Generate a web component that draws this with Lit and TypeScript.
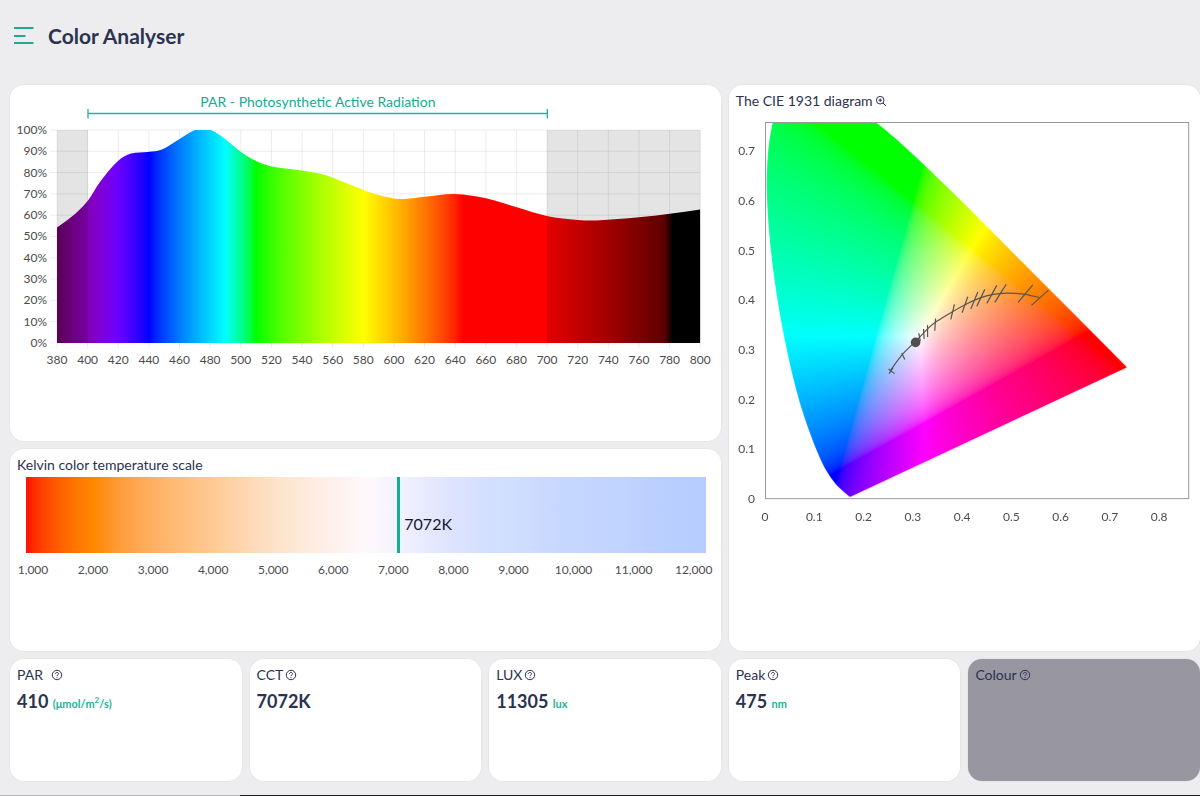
import { LitElement, html, svg, css } from "lit";
import { customElement, query } from "lit/decorators.js";

type Point = [number, number];

/** Chordal Catmull-Rom spline through the points, written as cubic Bézier segments. */
function smoothPath(points: Point[]): string {
  const last = points.length - 1;
  const dist = (a: Point, b: Point) => Math.hypot(b[0] - a[0], b[1] - a[1]);
  const slopes = points.map((p, i): Point => {
    const a = points[Math.max(i - 1, 0)];
    const b = points[Math.min(i + 1, last)];
    const span = dist(a, p) + dist(p, b);
    return [(b[0] - a[0]) / span, (b[1] - a[1]) / span];
  });
  let d = `M${points[0][0]} ${points[0][1]}`;
  for (let i = 0; i < last; i++) {
    const p = points[i];
    const q = points[i + 1];
    const third = dist(p, q) / 3;
    const c = [
      p[0] + slopes[i][0] * third,
      p[1] + slopes[i][1] * third,
      q[0] - slopes[i + 1][0] * third,
      q[1] - slopes[i + 1][1] * third,
      q[0],
      q[1],
    ].map((v) => v.toFixed(2));
    d += `C${c.join(" ")}`;
  }
  return d;
}

/** Approximate display colour of one wavelength in nanometres. */
function wavelengthColor(w: number): string {
  let r = 0;
  let g = 0;
  let b = 0;
  if (w < 440) {
    r = (440 - w) / 60;
    b = 1;
  } else if (w < 490) {
    g = (w - 440) / 50;
    b = 1;
  } else if (w < 510) {
    g = 1;
    b = (510 - w) / 20;
  } else if (w < 580) {
    r = (w - 510) / 70;
    g = 1;
  } else if (w < 645) {
    r = 1;
    g = (645 - w) / 65;
  } else if (w <= 780) {
    r = 1;
  }
  let k = 1;
  if (w < 420) k = 0.3 + (0.7 * (w - 380)) / 40;
  else if (w > 700) k = 0.3 + (0.7 * (780 - w)) / 80;
  const level = (v: number) => (v <= 0 ? 0 : Math.round(255 * Math.pow(v * k, 0.8)));
  return `rgb(${level(r)},${level(g)},${level(b)})`;
}

const range = (from: number, to: number, step: number) =>
  Array.from({ length: Math.round((to - from) / step) + 1 }, (_, i) => from + i * step);

const questionIcon = html`<svg class="icon" viewBox="0 0 12 12" aria-hidden="true">
  <circle cx="6" cy="6" r="4.7" />
  <path d="M4.4 4.9c0-.9.7-1.5 1.6-1.5s1.6.6 1.6 1.4c0 .9-1.6 1.1-1.6 2.100" />
  <path d="M6 7.900v1" />
</svg>`;

const zoomIcon = html`<svg class="icon" viewBox="0 0 12 12" aria-hidden="true">
  <circle cx="5.2" cy="5.2" r="3.8" />
  <path d="M8 8l2.800 2.800M5.200 3.400v3.600M3.400 5.200h3.600" />
</svg>`;

const sx = (nm: number) => 47 + (nm - 380) * 1.532;
const sy = (percent: number) => 258 - percent * 2.13;

const SPECTRUM: Point[] = [
  [47, 142.5], [65, 129], [78, 115.5], [90, 97], [108, 76], [121, 68.5], [138, 67],
  [152, 64.5], [168, 55], [184, 45.5], [193, 44], [202, 45.5], [214, 53], [231, 67], [246, 76],
  [262, 81.5], [292, 85.5], [315, 90], [335, 97.5], [350, 103.5], [365, 109], [384, 113.5],
  [395, 114], [415, 111.8], [445, 109], [476, 113.3], [507, 122.3], [537, 131],
  [568, 135], [587, 135.5], [629, 132.3], [660, 128.7], [690.5, 124.5],
];

@customElement("spectrum-chart")
export class SpectrumChart extends LitElement {
  static styles = css`
    :host { display: block; }
    .chart { display: block; width: 100%; }
    .tick { font-size: 12px; fill: #4c4c4c; }
    .end { text-anchor: end; }
    .middle { text-anchor: middle; }
    .grid { stroke: #000; stroke-opacity: 0.08; }
    .shade { fill: #000; fill-opacity: 0.105; }
    .par { fill: #16ab92; font-size: 14px; text-anchor: middle; }
    .bracket { stroke: #26b39b; stroke-width: 1.3; fill: none; }
  `;

  render() {
    const curve = smoothPath(SPECTRUM);
    return html`<svg class="chart" viewBox="0 0 711 300" role="img" aria-label="Spectrum">
      <defs>
        <linearGradient id="rainbow">
          ${range(380, 775, 5).map(
            (w) => svg`<stop offset=${(w - 380) / 420} stop-color=${wavelengthColor(w)} />`
          )}
          <stop offset="0.945" stop-color="#610000" />
          <stop offset="0.957" stop-color="#000" />
        </linearGradient>
        <clipPath id="plot"><rect x="47" y="45" width="643.5" height="213" /></clipPath>
      </defs>
      <text class="par" x="308" y="22">PAR - Photosynthetic Active Radiation</text>
      <path class="bracket" d="M78 28.5H537.5M78 24v9.500M537.5 24v9.500" />
      <g class="grid">
        ${range(0, 100, 10).map((p) => svg`<path d=${`M40 ${sy(p)}H690`} />`)}
        ${range(380, 800, 20).map((w) => svg`<path d=${`M${sx(w)} 45V263`} />`)}
      </g>
      <path d="${curve}V258H47Z" fill="url(#rainbow)" clip-path="url(#plot)" />
      <rect class="shade" x="47" y="45" width="31" height="213" />
      <rect class="shade" x="537" y="45" width="153.5" height="213" />
      ${range(0, 100, 10).map((p) => svg`<text class="tick end" x="37" y=${sy(p) + 4}>${p}%</text>`)}
      ${range(380, 800, 20).map((w) => svg`<text class="tick middle" x=${sx(w)} y="279">${w}</text>`)}
    </svg>`;
  }
}

/** Spectral locus of the 1931 standard observer. */
const LOCUS: Point[] = [
  [0.1741, 0.005], [0.1714, 0.0051], [0.1689, 0.0069], [0.1644, 0.0109], [0.1566, 0.0177],
  [0.144, 0.0297], [0.1241, 0.0578], [0.1096, 0.0868], [0.0913, 0.1327], [0.0687, 0.2007],
  [0.0454, 0.295], [0.0235, 0.4127], [0.0082, 0.5384], [0.0039, 0.6548], [0.0139, 0.7502],
  [0.0389, 0.812], [0.0743, 0.8338], [0.1142, 0.8262], [0.1547, 0.8059], [0.2296, 0.7543],
  [0.3016, 0.6923], [0.3731, 0.6245], [0.4441, 0.5547], [0.5125, 0.4866], [0.5752, 0.4242],
  [0.627, 0.3725], [0.6915, 0.3083], [0.7347, 0.2653],
];

const PLANCKIAN: Point[] = [
  [161, 258], [172.7, 242], [186.7, 228], [199.3, 215], [208, 208], [223.3, 198.7],
  [236, 191.6], [249.3, 185.6], [262.7, 181.6], [277.7, 180], [294.3, 181], [310.3, 184.4],
];

const ISOTHERMS = [
  "M159.5 256l6 4.5M160 260.5l4-6", "M172.7 240l3 6.5", "M189.7 220l1.5 8",
  "M194.5 216l.5 10", "M198.5 212v12", "M206.5 205.5l-.8 12.2",
  "M225.3 191.3l-3.6 15", "M238.7 183.7l-5.7 16", "M248.7 179l-7 17",
  "M255.7 176.3l-8 17", "M267.7 172.3l-10 18", "M277 171.3l-11.3 18",
  "M303.7 171.7l-14.7 17.6", "M319.3 177l-17 15.3",
];

const CX = 492.5;
const CY = 497;
const PLOT_W = 423;
const PLOT_H = 377;

/** Linear light to an 8-bit sRGB channel. */
const encode = (v: number) =>
  255 * (v <= 0.0031308 ? 12.92 * v : 1.055 * Math.pow(v, 1 / 2.4) - 0.055);

@customElement("cie-diagram")
export class CieDiagram extends LitElement {
  @query("canvas") private canvas!: HTMLCanvasElement;

  static styles = css`
    :host { display: block; }
    .chart { display: block; width: 100%; }
    .gamut { display: block; width: 100%; height: 100%; }
    .frame { fill: none; stroke: #999; }
    .tick { font-size: 12px; fill: #4c4c4c; }
    .end { text-anchor: end; }
    .middle { text-anchor: middle; }
    .curve { fill: none; stroke: #555; stroke-width: 1.2; }
    .point { fill: #505050; }
  `;

  firstUpdated() {
    const source = document.createElement("canvas");
    source.width = PLOT_W;
    source.height = PLOT_H;
    const sctx = source.getContext("2d")!;
    const image = sctx.createImageData(PLOT_W, PLOT_H);
    for (let row = 0; row < PLOT_H; row++) {
      for (let col = 0; col < PLOT_W; col++) {
        const x = col / CX;
        const y = Math.max((PLOT_H - row) / CY, 0.001);
        const X = x / y;
        const Z = (1 - x - y) / y;
        const rgb = [
          3.2406 * X - 1.5372 - 0.4986 * Z,
          -0.9689 * X + 1.8758 + 0.0415 * Z,
          0.0557 * X - 0.204 + 1.057 * Z,
        ].map((v) => Math.max(v, 0));
        const peak = Math.max(...rgb);
        const at = (row * PLOT_W + col) * 4;
        rgb.forEach((v, i) => (image.data[at + i] = encode(v / peak)));
        image.data[at + 3] = 255;
      }
    }
    sctx.putImageData(image, 0, 0);

    const outline = LOCUS.map(([x, y]): Point => [x * CX, PLOT_H - y * CY]);
    const ctx = this.canvas.getContext("2d")!;
    ctx.clip(new Path2D(smoothPath(outline) + "Z"));
    ctx.drawImage(source, 0, 0);
  }

  render() {
    return html`<svg class="chart" viewBox="0 0 471 420" role="img" aria-label="Chromaticity diagram">
      <foreignObject x="36" y="9" width="423" height="377">
        <canvas class="gamut" width=${PLOT_W} height=${PLOT_H}></canvas>
      </foreignObject>
      <rect class="frame" x="36.5" y="9.5" width="423" height="376" />
      <path class="curve" d=${smoothPath(PLANCKIAN)} />
      ${ISOTHERMS.map((d) => svg`<path class="curve" d=${d} />`)}
      <circle class="point" cx="186.5" cy="229.3" r="4.8" />
      ${range(0, 7, 1).map(
        (n) => svg`<text class="tick end" x="26" y=${Math.round(390 - n * 49.7)}>${n / 10}</text>`
      )}
      ${range(0, 8, 1).map(
        (n) => svg`<text class="tick middle" x=${36 + n * 49.25} y="408">${n / 10}</text>`
      )}
    </svg>`;
  }
}

interface Reading {
  label: string;
  value?: string;
  unit?: unknown;
  tint?: boolean;
}

const READINGS: Reading[] = [
  { label: "PAR", value: "410", unit: html`(μmol/m<sup>2</sup>/s)` },
  { label: "CCT", value: "7072K" },
  { label: "LUX", value: "11305", unit: "lux" },
  { label: "Peak", value: "475", unit: "nm" },
  { label: "Colour", tint: true },
];

@customElement("app-root")
export class AppRoot extends LitElement {
  private kelvin = 7072;

  static styles = css`
    :host {
      display: flex;
      flex-direction: column;
      min-height: 100vh;
      background: #ededef;
      color: #2b3350;
      font-family: Lato, "Open Sans", sans-serif;
      font-size: 14px;
    }
    button {
      display: inline-flex;
      padding: 0;
      border: 0;
      background: none;
      color: inherit;
      cursor: pointer;
    }
    .header {
      display: flex;
      align-items: center;
      gap: 14px;
      padding: 24px 14px 37px;
    }
    .menu { color: #1fab93; }
    .menu-icon { display: block; width: 20px; height: 20px; fill: currentColor; }
    .title { margin: 0; font-size: 21px; line-height: 24px; font-weight: 700; }
    .board {
      flex: 1;
      display: grid;
      grid-template-columns: repeat(5, minmax(0, 1fr));
      grid-template-rows: 356fr 202fr 122fr;
      gap: 8px;
      padding: 0 0 14px 10px;
    }
    .card {
      border-radius: 14px;
      background: #fff;
      box-shadow: 0 0 0 1px #e6e6e9;
      overflow: hidden;
    }
    .wide { grid-column: span 3; }
    .tall { grid-column: 4 / span 2; grid-row: 1 / span 2; }
    .tint { background: #9896a0; }
    .heading {
      display: flex;
      align-items: center;
      gap: 2px;
      margin: 0;
      padding: 7px 7px 3px;
      font-size: 14px;
      line-height: 18px;
      font-weight: 400;
    }
    .spaced { gap: 8px; }
    .icon {
      display: block;
      width: 12px;
      height: 12px;
      fill: none;
      stroke: currentColor;
      stroke-width: 1;
    }
    .bar {
      position: relative;
      height: 76px;
      margin: 0 15px 0 16px;
      background: linear-gradient(
        90deg,
        #ff1200 0%, #ff3400 1.5%, #ff5500 4%, #ff7800 7.5%, #ff8800 10%, #ff9830 13%,
        #ffa64e 16%, #ffb46b 20%, #ffc080 24%, #ffcb97 28%, #fed9b6 33%, #fde4cc 37.5%,
        #feece0 42%, #fef1ee 46%, #fff8f9 49.5%, #fbf7ff 51.5%, #f1f1ff 55%, #e7e9ff 59%,
        #dde3fe 63%, #d4e0ff 67%, #cfddff 72%, #c6d7ff 79%, #c0d2ff 88%, #b9cfff 94%, #b7cbff 100%
      );
    }
    .marker {
      position: absolute;
      top: 0;
      bottom: 0;
      display: flex;
      align-items: center;
      padding: 18px 0 0 4px;
      border-left: 3px solid #16ab92;
      color: #14182a;
      font-size: 16px;
      line-height: 20px;
    }
    .scale {
      display: flex;
      justify-content: space-between;
      padding: 8px 7px 0 3px;
      font-size: 12px;
      line-height: 18px;
      color: #4c4c4c;
    }
    .scale-label { width: 40px; text-align: center; }
    .value {
      margin: 0;
      padding: 0 7px;
      font-size: 18px;
      line-height: 28px;
      font-weight: 700;
    }
    .unit { color: #1fb397; font-size: 11px; }
    .unit sup { font-size: 8px; line-height: 0; }
    .edge { height: 1px; background: linear-gradient(90deg, #b9b9bb 20%, #1c1c20 20%); }
  `;

  private renderReading(r: Reading) {
    return html`<section class="card ${r.tint ? "tint" : ""}">
      <h2 class="heading ${r.label === "PAR" ? "spaced" : ""}">
        ${r.label}<button type="button" aria-label="About ${r.label}">${questionIcon}</button>
      </h2>
      ${r.value
        ? html`<p class="value">${r.value} ${r.unit ? html`<span class="unit">${r.unit}</span>` : ""}</p>`
        : ""}
    </section>`;
  }

  render() {
    const position = ((this.kelvin - 900) / 11300) * 100;
    return html`
      <header class="header">
        <button class="menu" type="button" aria-label="Menu">
          <svg class="menu-icon" viewBox="0 0 20 20" aria-hidden="true">
            <path d="M0 1h19.5v2H0zM0 9h11.5v2H0zM0 16h19.5v2H0z" />
          </svg>
        </button>
        <h1 class="title">Color Analyser</h1>
      </header>
      <main class="board">
        <section class="card wide"><spectrum-chart></spectrum-chart></section>
        <section class="card tall">
          <h2 class="heading">
            The CIE 1931 diagram<button type="button" aria-label="Enlarge">${zoomIcon}</button>
          </h2>
          <cie-diagram></cie-diagram>
        </section>
        <section class="card wide">
          <h2 class="heading">Kelvin color temperature scale</h2>
          <div class="bar">
            <div class="marker" style="left:${position}%">${this.kelvin}K</div>
          </div>
          <div class="scale">
            ${range(1000, 12000, 1000).map(
              (k) => html`<span class="scale-label">${k.toLocaleString("en-US")}</span>`
            )}
          </div>
        </section>
        ${READINGS.map((r) => this.renderReading(r))}
      </main>
      <div class="edge"></div>
    `;
  }
}
